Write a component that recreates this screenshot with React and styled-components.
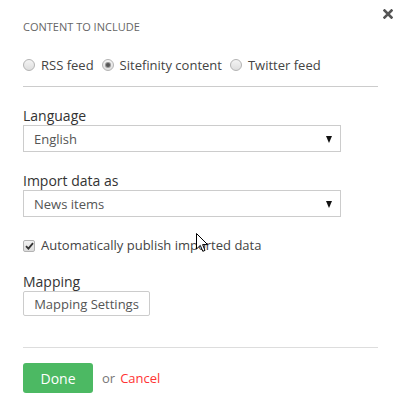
import React from "react";
import styled, { createGlobalStyle } from "styled-components";

const Global = createGlobalStyle`
  html, body { margin: 0; padding: 0; background: #fff; }
  body { font-family: "Open Sans", "Noto Sans", sans-serif; color: #333; }
`;

const Panel = styled.div`
  position: relative;
  width: 408px;
  height: 411px;
  box-sizing: border-box;
  padding: 19px 30px 0 23px;
  background: #fff;
`;

const Title = styled.div`
  font-size: 11px;
  line-height: 15px;
  color: #666;
  text-transform: uppercase;
`;

const Close = styled.button`
  position: absolute;
  top: 9px;
  left: 383px;
  width: 10px;
  height: 10px;
  padding: 0;
  border: 0;
  background: none;
  display: flex;
`;

const RadioRow = styled.div`
  display: flex;
  align-items: center;
  gap: 8px;
  margin-top: 22px;
  height: 18px;
`;

const Option = styled.label`
  display: flex;
  align-items: center;
  gap: 6px;
  font-size: 13px;
  line-height: 18px;
  color: #444;
`;

const RadioDot = styled.span`
  width: 12px;
  height: 12px;
  box-sizing: border-box;
  border-radius: 50%;
  border: 1px solid #b3b3b3;
  background: linear-gradient(#f4f4f4, #dedede);
  display: flex;
  align-items: center;
  justify-content: center;
  &::after {
    content: "";
    width: 4px;
    height: 4px;
    border-radius: 50%;
    background: ${(p) => (p.$checked ? "#555" : "transparent")};
    box-shadow: ${(p) => (p.$checked ? "0 0 0 1px #999" : "none")};
  }
`;

const Divider = styled.hr`
  margin: ${(p) => p.$top}px 0 0;
  border: 0;
  border-top: 1px solid ${(p) => p.$color || "#ccc"};
  height: 0;
`;

const Field = styled.div`
  margin-top: ${(p) => p.$top}px;
  display: flex;
  flex-direction: column;
`;

const Label = styled.div`
  font-size: 14px;
  line-height: 19px;
  color: #333;
`;

const Select = styled.div`
  width: 318px;
  height: 27px;
  box-sizing: border-box;
  border: 1px solid #ccc;
  display: flex;
  align-items: center;
  justify-content: space-between;
  padding: 0 8px 0 10px;
  font-size: 13px;
  color: #555;
`;

const Caret = styled.span`
  width: 0;
  height: 0;
  border-left: 3.5px solid transparent;
  border-right: 3.5px solid transparent;
  border-top: 7px solid #111;
  margin-top: 1px;
`;

const CheckRow = styled.label`
  margin-top: 19px;
  display: flex;
  align-items: center;
  gap: 6px;
  font-size: 13px;
  line-height: 18px;
  color: #444;
`;

const CheckBox = styled.span`
  width: 12px;
  height: 12px;
  box-sizing: border-box;
  border: 1px solid #b3b3b3;
  border-radius: 2px;
  background: linear-gradient(#f2f2f2, #dcdcdc);
  display: flex;
  align-items: center;
  justify-content: center;
  margin-top: 2px;
`;

const SecondaryButton = styled.button`
  width: 127px;
  height: 25px;
  box-sizing: border-box;
  border: 1px solid #ccc;
  border-radius: 2px;
  background: #fff;
  font-family: inherit;
  font-size: 13px;
  color: #555;
  padding: 0;
`;

const Footer = styled.div`
  margin-top: 15px;
  display: flex;
  align-items: center;
  gap: 9px;
  font-size: 13px;
`;

const PrimaryButton = styled.button`
  width: 70px;
  height: 30px;
  border: 0;
  border-radius: 3px;
  background: #4cb963;
  color: #fff;
  font-family: inherit;
  font-size: 14px;
  padding: 0;
`;

const Or = styled.span`
  color: #777;
`;

const CancelLink = styled.a`
  color: #f33;
  text-decoration: none;
  margin-left: -4px;
`;

const Cursor = styled.svg`
  position: absolute;
  left: 196px;
  top: 233px;
`;

export default function App() {
  return (
    <>
      <Global />
      <Panel>
        <Title>Content to include</Title>
        <Close aria-label="Close">
          <svg width="10" height="10" viewBox="0 0 10 10">
            <path d="M1.5 1.5 L8.5 8.5 M8.5 1.5 L1.5 8.5" stroke="#555" strokeWidth="2.6" strokeLinecap="square" />
          </svg>
        </Close>
        <RadioRow>
          <Option><RadioDot />RSS feed</Option>
          <Option><RadioDot $checked />Sitefinity content</Option>
          <Option><RadioDot />Twitter feed</Option>
        </RadioRow>
        <Divider $top={12} />
        <Field $top={19}>
          <Label>Language</Label>
          <Select>English<Caret /></Select>
        </Field>
        <Field $top={19}>
          <Label>Import data as</Label>
          <Select>News items<Caret /></Select>
        </Field>
        <CheckRow>
          <CheckBox>
            <svg width="9" height="8" viewBox="0 0 9 8">
              <path d="M1 4.2 L3.4 6.6 L8 1.2" stroke="#333" strokeWidth="1.8" fill="none" />
            </svg>
          </CheckBox>
          Automatically publish imported data
        </CheckRow>
        <Field $top={18}>
          <Label>Mapping</Label>
          <div><SecondaryButton>Mapping Settings</SecondaryButton></div>
        </Field>
        <Divider $top={31} $color="#ddd" />
        <Footer>
          <PrimaryButton>Done</PrimaryButton>
          <Or>or</Or>
          <CancelLink href="#">Cancel</CancelLink>
        </Footer>
        <Cursor width="13" height="20" viewBox="0 0 13 20">
          <path d="M0.5 0.5 L0.5 16 L4.3 12.4 L6.8 18.3 L9 17.4 L6.6 11.6 L11.6 11.6 Z" fill="#fff" stroke="#000" strokeWidth="1" strokeLinejoin="miter" />
        </Cursor>
      </Panel>
    </>
  );
}
